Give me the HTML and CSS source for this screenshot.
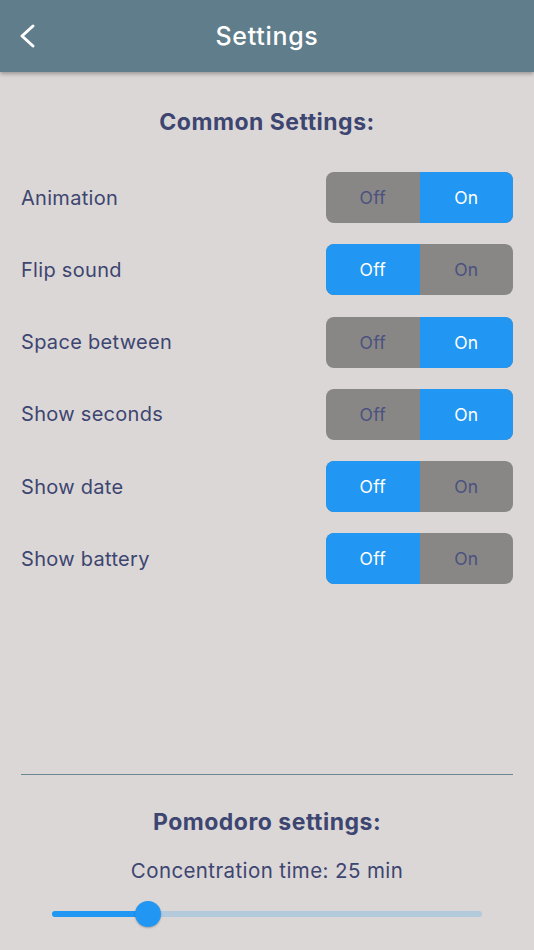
FILE: index.html
```html
<!DOCTYPE html>
<html>
<head>
<meta charset="utf-8">
<link rel="stylesheet" href="styles.css">
</head>
<body>
<div class="app">
  <header class="bar">
    <svg class="back" width="20" height="26" viewBox="0 0 20 26"><path d="M14 3 L3 13 L14 23" fill="none" stroke="#fff" stroke-width="3" stroke-linecap="round" stroke-linejoin="round"/></svg>
    <div class="title">Settings</div>
  </header>
  <main class="content">
    <h2 class="section">Common Settings:</h2>
    <div class="rows">
      <div class="row"><span class="label">Animation</span><div class="toggle"><span class="seg">Off</span><span class="seg on">On</span></div></div>
      <div class="row"><span class="label">Flip sound</span><div class="toggle"><span class="seg on">Off</span><span class="seg">On</span></div></div>
      <div class="row"><span class="label">Space between</span><div class="toggle"><span class="seg">Off</span><span class="seg on">On</span></div></div>
      <div class="row"><span class="label">Show seconds</span><div class="toggle"><span class="seg">Off</span><span class="seg on">On</span></div></div>
      <div class="row"><span class="label">Show date</span><div class="toggle"><span class="seg on">Off</span><span class="seg">On</span></div></div>
      <div class="row"><span class="label">Show battery</span><div class="toggle"><span class="seg on">Off</span><span class="seg">On</span></div></div>
    </div>
    <div class="spacer"></div>
    <hr class="divider">
    <h2 class="section pomo">Pomodoro settings:</h2>
    <div class="conc">Concentration time: 25 min</div>
    <div class="slider">
      <div class="track"><div class="fill" style="width: 22.4%"></div><div class="thumb" style="left: 22.4%"></div></div>
    </div>
  </main>
</div>
</body>
</html>
```
FILE: styles.css
```css
html, body {
  margin: 0;
  padding: 0;
}
body {
  background: #dbd7d6;
  font-family: Inter, "Noto Sans", sans-serif;
  color: #3d4571;
}
.app {
  width: 534px;
  height: 950px;
  display: flex;
  flex-direction: column;
  overflow: hidden;
}
.bar {
  height: 72px;
  flex: none;
  background: #607d8b;
  box-shadow: 0 2px 4px rgba(0,0,0,0.3);
  display: flex;
  align-items: center;
  position: relative;
  z-index: 1;
}
.back {
  margin-left: 19px;
  flex: none;
}
.title {
  position: absolute;
  left: 0;
  right: 0;
  text-align: center;
  color: #fff;
  font-size: 25px;
  font-weight: 500;
  letter-spacing: 0.7px;
  pointer-events: none;
}
.content {
  flex: 1;
  display: flex;
  flex-direction: column;
  padding: 0 21px;
}
.section {
  margin: 36px 0 0;
  text-align: center;
  font-size: 23px;
  font-weight: 700;
  letter-spacing: 0.5px;
  line-height: 28px;
  color: #3d4571;
}
.rows {
  margin-top: 36px;
  display: flex;
  flex-direction: column;
  gap: 21.3px;
}
.row {
  display: flex;
  align-items: center;
  justify-content: space-between;
  height: 51px;
}
.label {
  font-size: 20px;
  font-weight: 400;
  letter-spacing: 0.3px;
}
.toggle {
  width: 187px;
  height: 51px;
  border-radius: 8px;
  overflow: hidden;
  display: flex;
  background: #888785;
}
.seg {
  flex: 1;
  display: flex;
  align-items: center;
  justify-content: center;
  font-size: 17.5px;
  letter-spacing: 0.2px;
  color: #4a5180;
}
.seg.on {
  background: #2196f3;
  color: #fff;
}
.spacer {
  flex: 1;
}
.divider {
  border: 0;
  height: 1.5px;
  background: #6a8796;
  margin: 0;
}
.pomo {
  margin-top: 33px;
}
.conc {
  text-align: center;
  font-size: 20.5px;
  letter-spacing: 0.4px;
  margin-top: 22px;
  line-height: 26px;
}
.slider {
  padding: 27px 31px 33px;
}
.track {
  position: relative;
  height: 6px;
  border-radius: 3px;
  background: #b3c9dc;
}
.fill {
  height: 6px;
  border-radius: 3px;
  background: #2196f3;
}
.thumb {
  position: absolute;
  top: 3px;
  width: 26px;
  height: 26px;
  margin: -13px 0 0 -13px;
  border-radius: 50%;
  background: #2196f3;
  box-shadow: 0 1px 2px rgba(0,0,0,0.25);
}
```
